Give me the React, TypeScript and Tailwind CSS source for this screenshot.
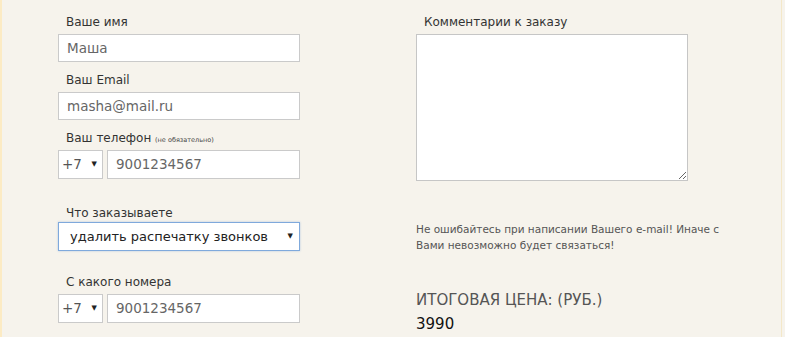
const font = { fontFamily: '"DejaVu Sans", Verdana, sans-serif' };

function Label({ children, className = "" }: { children: React.ReactNode; className?: string }) {
  return (
    <div className={`h-4 pl-2 text-[12px] leading-4 text-[#333] ${className}`}>{children}</div>
  );
}

function TextBox({ value }: { value: string }) {
  return (
    <input
      readOnly
      defaultValue={value}
      className="mt-1 block h-[28px] w-[242px] border border-[#cacaca] bg-white px-2 text-[13.5px] text-[#666] outline-none"
      style={font}
    />
  );
}

function PhoneRow({ number }: { number: string }) {
  return (
    <div className="mt-1 flex h-[29px] gap-[4px]">
      <div className="flex w-[45px] items-center justify-between border border-[#cacaca] bg-white pl-[3px] pr-[5px] text-[13.5px] text-[#555]">
        <span>+7</span>
        <span className="text-[7px] text-[#222]">▼</span>
      </div>
      <input
        readOnly
        defaultValue={number}
        className="block w-[193px] border border-[#cacaca] bg-white px-2 text-[13.5px] text-[#666] outline-none"
        style={font}
      />
    </div>
  );
}

export default function App() {
  return (
    <div className="h-[337px] w-[785px] overflow-hidden bg-[#f6f3ec]" style={font}>
      <div className="flex h-full w-[782px] border-l-2 border-r border-l-[#fcebc4] border-r-[#f4e8c9]">
        {/* left column */}
        <div className="w-[356px] pl-[56px] pt-[14px]">
          <Label>Ваше имя</Label>
          <TextBox value="Маша" />

          <Label className="mt-[10px]">Ваш Email</Label>
          <TextBox value="masha@mail.ru" />

          <Label className="mt-[10px]">
            Ваш телефон <span className="text-[6.5px] text-[#444]">(не обязательно)</span>
          </Label>
          <PhoneRow number="9001234567" />

          <Label className="mt-[26px]">Что заказываете</Label>
          <div className="mt-[1px] flex h-[29px] w-[242px] items-center justify-between border border-[#7fa9dc] bg-white pl-[11px] pr-[6px] text-[13px] text-[#222] shadow-[0_0_2px_rgba(90,140,210,0.4)]">
            <span>удалить распечатку звонков</span>
            <span className="text-[7px]">▼</span>
          </div>

          <Label className="mt-[23px]">С какого номера</Label>
          <PhoneRow number="9001234567" />
        </div>

        {/* right column */}
        <div className="w-[300px] pl-[58px] pt-[14px]">
          <Label>Комментарии к заказу</Label>
          <textarea
            readOnly
            className="mt-1 block h-[147px] w-[272px] border border-[#c6c6c6] bg-white outline-none"
          />
          <p className="mt-[40px] w-[320px] text-[10.5px] leading-4 text-[#555]">
            Не ошибайтесь при написании Вашего e-mail! Иначе с Вами невозможно будет связаться!
          </p>
          <div className="mt-[35px] text-[15px] leading-6 text-[#555]">ИТОГОВАЯ ЦЕНА: (РУБ.)</div>
          <div className="text-[15px] leading-6 text-[#111]">3990</div>
        </div>
      </div>
    </div>
  );
}
